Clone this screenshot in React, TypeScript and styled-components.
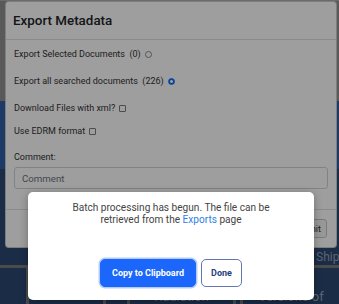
import styled, { createGlobalStyle } from "styled-components";

const GlobalStyle = createGlobalStyle`
  html, body { margin: 0; padding: 0; background: #1b2c47; }
  body { font-family: Roboto, "Liberation Sans", Arial, sans-serif; }
  * { box-sizing: border-box; }
`;

const Screen = styled.div`
  position: relative;
  width: 339px;
  height: 304px;
  overflow: hidden;
  background: #909090;
  border-top: 1px solid #6a6a6a;
`;

/* page behind the dialogs */
const Page = styled.div`
  display: flex;
  flex-direction: column;
  height: 100%;
`;
const TopBand = styled.div`
  height: 104px;
  background: #909090;
`;
const Band = styled.div<{ $h: number; $bg: string }>`
  height: ${(p) => p.$h}px;
  background: ${(p) => p.$bg};
`;
const ShipRow = styled.div`
  display: grid;
  grid-template-columns: 316px 1fr;
  align-items: end;
  height: 100px;
  padding-bottom: 1px;
  background: #2c4773;
`;
const GridLine = styled.div`
  height: 3px;
  background: #7a7a7a;
`;
const TableRow = styled.div`
  flex: 1;
  display: grid;
  grid-template-columns: 26px 77px 24px 106px 7px 1fr;
  background: #2c4773;
`;
const Cell = styled.div<{ $sep?: boolean }>`
  padding-top: 22px;
  border-left: ${(p) => (p.$sep ? "3px solid #7a7a7a" : "none")};
  color: #98a3b8;
  font-size: 13px;
  line-height: 14px;
  white-space: nowrap;
  text-align: center;
`;
const BgText = styled.span`
  color: #98a3b8;
  font-size: 12px;
  line-height: 14px;
  white-space: nowrap;
`;

/* export dialog */
const Dialog = styled.div`
  position: absolute;
  left: 5px;
  top: 0;
  width: 332px;
  height: 247px;
  display: flex;
  flex-direction: column;
  background: #fff;
  border: 1px solid rgba(0, 0, 0, 0.2);
  border-radius: 4px;
`;
const Header = styled.div`
  height: 38px;
  display: flex;
  align-items: center;
  padding: 0 7px;
  border-bottom: 1px solid #dee2e6;
`;
const Title = styled.h2`
  margin: 0;
  font-size: 13.4px;
  font-weight: 500;
  color: #212529;
`;
const Body = styled.div`
  padding: 8px 8px 0;
`;
const Row = styled.div<{ $mb: number }>`
  display: flex;
  align-items: center;
  gap: 2px;
  margin-bottom: ${(p) => p.$mb}px;
  font-size: 9px;
  line-height: 12px;
  color: #333;
  white-space: pre;
`;
const Radio = styled.span<{ $on?: boolean }>`
  display: inline-block;
  width: 7px;
  height: 7px;
  border-radius: 50%;
  border: 1px solid ${(p) => (p.$on ? "#0d6efd" : "#8a8a8a")};
  background: ${(p) =>
    p.$on ? "radial-gradient(circle, #fff 0 1.2px, #0d6efd 1.6px)" : "#fff"};
`;
const Check = styled.span`
  display: inline-block;
  width: 7px;
  height: 7px;
  border: 1px solid #7a7a7a;
  border-radius: 1px;
  background: #fff;
`;
const Label = styled.div`
  font-size: 9px;
  line-height: 12px;
  color: #333;
  margin-bottom: 4px;
`;
const Input = styled.input`
  display: block;
  width: 100%;
  height: 22px;
  padding: 0 7px;
  border: 1px solid #ced4da;
  border-radius: 3px;
  font-family: inherit;
  font-size: 9.7px;
  color: #333;
  &::placeholder { color: #6c757d; }
`;
const Footer = styled.div`
  margin-top: auto;
  height: 38px;
  display: flex;
  justify-content: flex-end;
  align-items: center;
  padding-right: 9px;
  border-top: 1px solid #dee2e6;
`;
const SubmitButton = styled.button`
  height: 19px;
  padding: 0 5px;
  border: 1px solid #c6c6c6;
  border-radius: 3px;
  background: #f6f6f6;
  font-family: inherit;
  font-size: 9px;
  color: #333;
`;

const Backdrop = styled.div`
  position: absolute;
  inset: 0;
  background: rgba(0, 0, 0, 0.38);
`;

/* confirmation popup */
const Popup = styled.div`
  position: absolute;
  left: 28px;
  top: 191px;
  width: 286px;
  height: 108px;
  display: flex;
  flex-direction: column;
  align-items: center;
  padding-top: 10px;
  background: #fff;
  border-radius: 5px;
  box-shadow: 0 2px 8px rgba(0, 0, 0, 0.3);
`;
const Message = styled.p`
  margin: 0;
  font-size: 10.1px;
  line-height: 12px;
  color: #444;
  text-align: center;
  white-space: nowrap;
`;
const Link = styled.a`
  color: #2f7fe8;
  text-decoration: none;
`;
const Actions = styled.div`
  display: flex;
  gap: 5px;
  margin-top: 33px;
`;
const Button = styled.button<{ $primary?: boolean }>`
  height: 28px;
  width: ${(p) => (p.$primary ? 96 : 41)}px;
  padding: 0;
  border-radius: 5px;
  font-family: inherit;
  font-size: 9px;
  font-weight: 700;
  border: 1px solid ${(p) => (p.$primary ? "#1b66fb" : "#6378b3")};
  background: ${(p) => (p.$primary ? "#1b66fb" : "#fff")};
  color: ${(p) => (p.$primary ? "#fff" : "#263f7d")};
  box-shadow: ${(p) => (p.$primary ? "0 0 0 1.5px #b3cbf6" : "none")};
`;

export default function App() {
  return (
    <>
      <GlobalStyle />
      <Screen>
        <Page>
          <TopBand />
          <Band $h={70} $bg="#2f5ea5" />
          <ShipRow>
            <span />
            <BgText>Ship</BgText>
          </ShipRow>
          <GridLine />
          <TableRow>
            <Cell />
            <Cell $sep />
            <Cell $sep />
            <Cell $sep>Radiation</Cell>
            <Cell $sep />
            <Cell $sep>Versions of</Cell>
          </TableRow>
        </Page>

        <Dialog>
          <Header>
            <Title>Export Metadata</Title>
          </Header>
          <Body>
            <Row $mb={15}>
              Export Selected Documents  (0) <Radio />
            </Row>
            <Row $mb={15}>
              Export all searched documents  (226) <Radio $on />
            </Row>
            <Row $mb={11}>
              Download Files with xml? <Check />
            </Row>
            <Row $mb={14}>
              Use EDRM format <Check />
            </Row>
            <Label>Comment:</Label>
            <Input placeholder="Comment" />
          </Body>
          <Footer>
            <SubmitButton>Submit</SubmitButton>
          </Footer>
        </Dialog>

        <Backdrop />

        <Popup>
          <Message>
            Batch processing has begun. The file can be
            <br />
            retrieved from the <Link href="#">Exports</Link> page
          </Message>
          <Actions>
            <Button $primary>Copy to Clipboard</Button>
            <Button>Done</Button>
          </Actions>
        </Popup>
      </Screen>
    </>
  );
}
